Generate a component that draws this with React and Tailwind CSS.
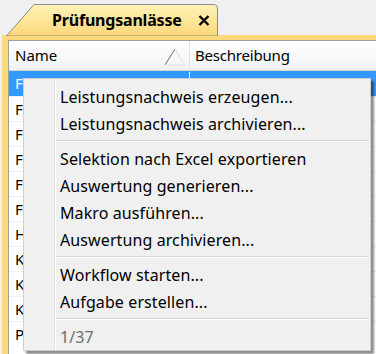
import React from 'react';

const rows = ['F', 'F', 'F', 'F', 'F', 'F', 'H', 'K', 'K', 'K', 'P'];

const menu = [
  ['Leistungsnachweis erzeugen...'],
  ['Leistungsnachweis archivieren...'],
  null,
  ['Selektion nach Excel exportieren'],
  ['Auswertung generieren...'],
  ['Makro ausführen...'],
  ['Auswertung archivieren...'],
  null,
  ['Workflow starten...'],
  ['Aufgabe erstellen...'],
  null,
  ['1/37', true],
];

function Tab() {
  return (
    <div className="relative ml-[6px] mt-[4px] h-[31px] w-[212px]">
      <svg className="absolute inset-0" width="212" height="32" viewBox="0 0 212 32">
        <defs>
          <linearGradient id="tabg" x1="0" y1="0" x2="0" y2="1">
            <stop offset="0" stopColor="#fff3b8" />
            <stop offset="1" stopColor="#fcd77a" />
          </linearGradient>
        </defs>
        <path d="M0.5 32 L28 0.5 H208 Q211.5 0.5 211.5 4 V32 Z" fill="url(#tabg)" stroke="#8a8a8a" strokeWidth="1" />
      </svg>
      <div className="relative flex h-full items-center pl-[46px] pt-[1px]">
        <span className="text-[16px] font-bold tracking-[-0.2px] text-black">Prüfungsanlässe</span>
        <svg className="ml-[16px]" width="12" height="11" viewBox="0 0 12 11">
          <path d="M1.5 1 L10.5 10 M10.5 1 L1.5 10" stroke="#000" strokeWidth="2.4" />
        </svg>
      </div>
    </div>
  );
}

export default function App() {
  return (
    <div
      className="relative h-[354px] w-[376px] overflow-hidden bg-[#f0f0f0]"
      style={{ fontFamily: '"Noto Sans", "Open Sans", sans-serif' }}
    >
      <div className="flex h-[35px] items-end">
        <Tab />
      </div>

      {/* panel with yellow frame */}
      <div className="ml-[2px] h-[319px] border-l-[6px] border-t-[5px] border-[#fbd87c] bg-[#fbd87c]">
        <div className="h-full border-l border-t border-[#a0a0a0] bg-white">
          {/* header */}
          <div className="flex h-[30px] items-center border-b border-[#d5d5d5] bg-gradient-to-b from-white to-[#f1f2f4] text-[15px] text-black">
            <div className="relative flex h-full w-[181px] items-center border-r border-[#e3e3e3] pl-[6px]">
              Name
              <svg className="absolute left-[155px] top-[7px]" width="22" height="18" viewBox="0 0 22 18">
                <path d="M1 17 L11 1" stroke="#6a6a6a" strokeWidth="1" fill="none" />
                <path d="M11 1 L21 17 H1" stroke="#e0e0e0" strokeWidth="1" fill="none" />
              </svg>
            </div>
            <div className="pl-[5px] tracking-[-0.2px]">Beschreibung</div>
          </div>

          {/* rows */}
          {rows.map((r, i) => (
            <div
              key={i}
              className={
                'flex h-[25px] items-center text-[15px] ' +
                (i === 0 ? 'bg-[#3399ff] text-white' : 'border-t border-[#f0f0f0] text-black')
              }
            >
              <div className={'w-[181px] pl-[6px] ' + (i === 0 ? 'border-r border-white' : '')}>
                {r}
              </div>
            </div>
          ))}
        </div>
      </div>

      {/* context menu */}
      <div className="absolute left-[23px] top-[78px] w-[348px] border border-[#cfcfcf] bg-[#f0f0f0] pt-[4px] shadow-[3px_3px_2px_rgba(0,0,0,0.45)]">
        <div className="absolute bottom-0 left-[30px] top-0 w-[2px] border-l border-[#e2e2e2] bg-white" />
        {menu.map((m, i) =>
          m === null ? (
            <div key={i} className="relative flex h-[8px] items-center pl-[32px] pr-[1px]">
              <div className="h-[2px] w-full border-t border-[#d7d7d7] bg-white" />
            </div>
          ) : (
            <div
              key={i}
              className={
                'relative flex h-[27px] items-center pl-[36px] text-[16px] tracking-[0.1px] ' +
                (m[1] ? 'text-[#6d6d6d]' : 'text-black')
              }
            >
              {m[0]}
            </div>
          )
        )}
      </div>
    </div>
  );
}
